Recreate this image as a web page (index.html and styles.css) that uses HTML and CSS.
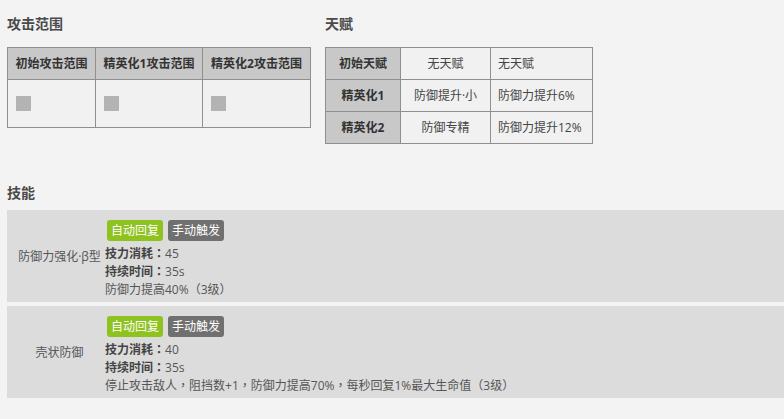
FILE: index.html
```html
<!DOCTYPE html>
<html lang="zh-CN">
<head>
<meta charset="utf-8">
<link rel="stylesheet" href="styles.css">
</head>
<body>
<div class="top">
  <section class="range">
    <h2 class="title">攻击范围</h2>
    <table class="tbl range-tbl">
      <colgroup><col class="c1"><col class="c2"><col class="c3"></colgroup>
      <tr class="head">
        <th>初始攻击范围</th><th>精英化1攻击范围</th><th>精英化2攻击范围</th>
      </tr>
      <tr class="body">
        <td><span class="sq"></span></td><td><span class="sq"></span></td><td><span class="sq"></span></td>
      </tr>
    </table>
  </section>
  <section class="talent">
    <h2 class="title">天赋</h2>
    <table class="tbl talent-tbl">
      <colgroup><col class="t1"><col class="t2"><col class="t3"></colgroup>
      <tr><th>初始天赋</th><td class="mid">无天赋</td><td class="left">无天赋</td></tr>
      <tr><th>精英化1</th><td class="mid">防御提升·小</td><td class="left">防御力提升6%</td></tr>
      <tr><th>精英化2</th><td class="mid">防御专精</td><td class="left">防御力提升12%</td></tr>
    </table>
  </section>
</div>

<h2 class="title skills-title">技能</h2>
<div class="skills">
  <div class="skill">
    <div class="skill-name">防御力强化·β型</div>
    <div class="skill-body">
      <div class="badges"><span class="badge green">自动回复</span><span class="badge gray">手动触发</span></div>
      <div class="line"><b>技力消耗<span class="p" lang="zh-TW">：</span></b>45</div>
      <div class="line"><b>持续时间<span class="p" lang="zh-TW">：</span></b>35s</div>
      <div class="line">防御力提高40%<span class="p" lang="zh-TW">（</span>3级<span class="p" lang="zh-TW">）</span></div>
    </div>
  </div>
  <div class="skill">
    <div class="skill-name">壳状防御</div>
    <div class="skill-body">
      <div class="badges"><span class="badge green">自动回复</span><span class="badge gray">手动触发</span></div>
      <div class="line"><b>技力消耗<span class="p" lang="zh-TW">：</span></b>40</div>
      <div class="line"><b>持续时间<span class="p" lang="zh-TW">：</span></b>35s</div>
      <div class="line">停止攻击敌人<span class="p" lang="zh-TW">，</span>阻挡数+1<span class="p" lang="zh-TW">，</span>防御力提高70%<span class="p" lang="zh-TW">，</span>每秒回复1%最大生命值<span class="p" lang="zh-TW">（</span>3级<span class="p" lang="zh-TW">）</span></div>
    </div>
  </div>
</div>
</body>
</html>
```

FILE: styles.css
```css
html, body {
  margin: 0;
  padding: 0;
  overflow: hidden;
}
body {
  background: #f3f3f3;
  padding-left: 7px;
  font-family: "Open Sans", "Noto Sans CJK SC", sans-serif;
  font-size: 12px;
  color: #444;
}
.p {
  font-family: "Noto Sans CJK TC", "Noto Sans CJK SC", sans-serif;
}
.top {
  display: flex;
  gap: 14px;
  align-items: flex-start;
}
.title {
  margin: 14px 0 13px;
  font-size: 14px;
  line-height: 20px;
  height: 20px;
  font-weight: bold;
  color: #4a4a4a;
}
.tbl {
  border-collapse: collapse;
  table-layout: fixed;
  background: #f1f1f1;
}
.tbl th, .tbl td {
  border: 1px solid #8f8f8f;
  padding: 0;
  line-height: 16px;
}
.tbl th {
  background: #c8c8c8;
  font-weight: bold;
  color: #333;
  text-align: center;
}
.range-tbl { width: 303px; }
.range-tbl .c1 { width: 88px; }
.range-tbl .c2 { width: 107px; }
.range-tbl .c3 { width: 108px; }
.range-tbl .head th { height: 31px; }
.range-tbl .body td { height: 47px; padding-left: 8px; }
.sq {
  display: block;
  width: 15px;
  height: 15px;
  background: #b3b3b3;
}
.talent-tbl { width: 267px; }
.talent-tbl .t1 { width: 75px; }
.talent-tbl .t2 { width: 90px; }
.talent-tbl .t3 { width: 102px; }
.talent-tbl th, .talent-tbl td { height: 31px; }
.talent-tbl .mid { text-align: center; }
.talent-tbl .left { text-align: left; padding-left: 7px; }

.skills-title {
  margin: 39px 0 7px;
}
.skills {
  display: flex;
  flex-direction: column;
  gap: 4px;
}
.skill {
  display: flex;
  align-items: center;
  background: #dcdcdc;
  height: 92px;
}
.skill-name {
  width: 89px;
  padding-left: 8px;
  text-align: center;
  color: #555;
  line-height: 17px;
  white-space: nowrap;
}
.skill-body {
  align-self: stretch;
  padding: 10px 0 0 1px;
  color: #555;
}
.badges {
  display: flex;
  gap: 5px;
  margin-left: 2px;
  margin-bottom: 3px;
}
.badge {
  display: inline-block;
  height: 21px;
  line-height: 21px;
  padding: 0 4px;
  border-radius: 3px;
  color: #fff;
}
.badge.green { background: #8dc21f; }
.badge.gray { background: #707070; }
.line {
  line-height: 17px;
  white-space: nowrap;
}
.line b {
  color: #444;
}
```
